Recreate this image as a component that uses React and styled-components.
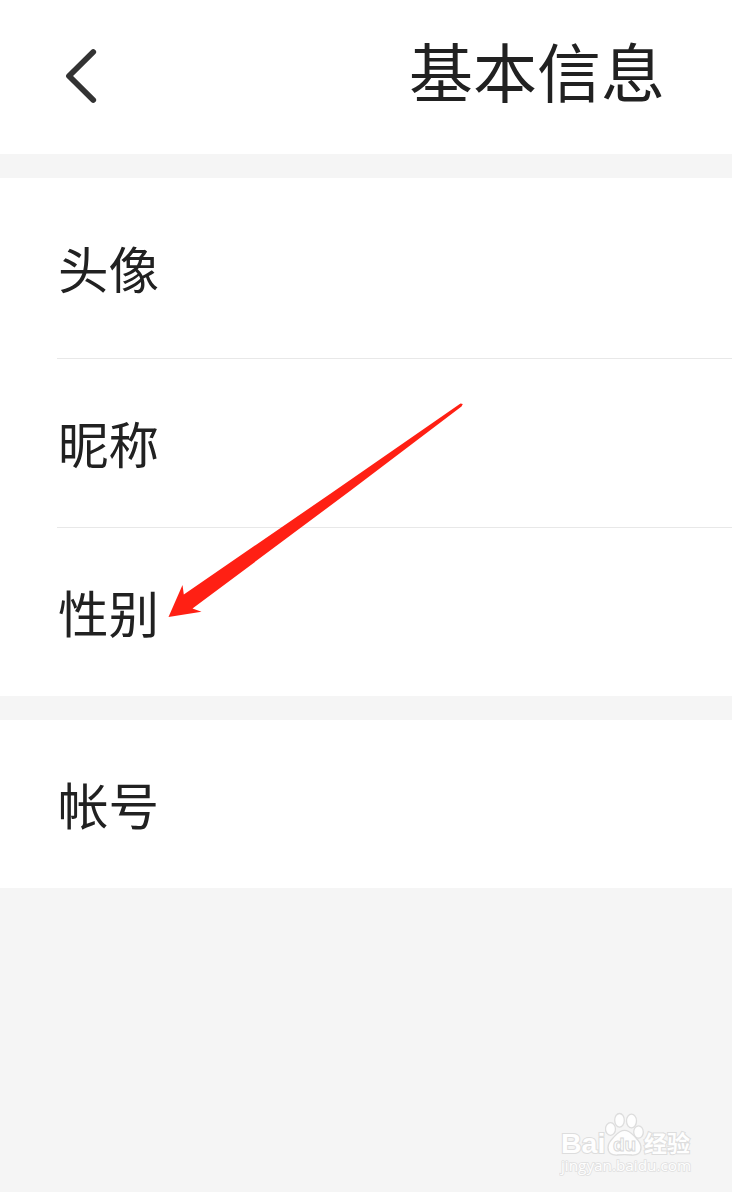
import styled, { createGlobalStyle } from "styled-components";

const GlobalStyle = createGlobalStyle`
  * {
    box-sizing: border-box;
  }

  body {
    margin: 0;
    background: #f5f5f5;
    font-family: "Noto Sans CJK SC", sans-serif;
    color: #212121;
  }
`;

const Page = styled.div`
  position: relative;
  width: 732px;
  height: 1192px;
  display: flex;
  flex-direction: column;
  gap: 24px;
  overflow: hidden;
  background: #f5f5f5;
`;

const Header = styled.header`
  height: 154px;
  display: flex;
  align-items: center;
  justify-content: space-between;
  padding: 0 67px 0 60px;
  background: #fff;
`;

const BackButton = styled.button`
  width: 44px;
  height: 64px;
  padding: 0;
  border: 0;
  background: none;
  cursor: pointer;

  svg {
    display: block;
  }
`;

const Title = styled.h1`
  margin: 0;
  padding-bottom: 16px;
  font-size: 64px;
  font-weight: 400;
  line-height: 96px;
`;

const Group = styled.section`
  background: #fff;
`;

const Row = styled.div`
  height: ${props => props.$height}px;
  margin-left: 57px;
  display: flex;
  align-items: center;
  border-bottom: ${props => (props.$divider ? "1px solid #e8e8e8" : "0")};
`;

const Label = styled.span`
  padding: 0 0 ${props => props.$lift}px 1px;
  font-size: 50.5px;
  line-height: 72px;
`;

const Arrow = styled.svg`
  position: absolute;
  left: 160px;
  top: 396px;
`;

const Watermark = styled.div`
  position: absolute;
  left: 561px;
  top: 1112px;
  width: 136px;
  opacity: 0.95;
`;

const Brand = styled.div`
  height: 45px;
  display: flex;
  align-items: flex-end;
`;

const Word = styled.span`
  width: ${props => props.$width}px;
  font-family: ${props => props.$font};
  font-size: ${props => props.$size}px;
  font-weight: 700;
  line-height: ${props => props.$line}px;
  white-space: nowrap;
  color: #fff;
  -webkit-text-stroke: 2px #dcdcdc;
  paint-order: stroke fill;
`;

const Paw = styled.svg`
  flex: none;
`;

const Site = styled.div`
  font-family: "Open Sans", sans-serif;
  font-size: 15.3px;
  line-height: 17px;
  white-space: nowrap;
  color: #fff;
  -webkit-text-stroke: 1.6px #e0e0e0;
  paint-order: stroke fill;
`;

const groups = [
  [
    { label: "头像", height: 181, lift: 2, divider: true },
    { label: "昵称", height: 169, lift: 2, divider: true },
    { label: "性别", height: 168, lift: 2, divider: false },
  ],
  [{ label: "帐号", height: 168, lift: 2, divider: false }],
];

export default function App() {
  return (
    <>
      <GlobalStyle />
      <Page>
        <Header>
          <BackButton aria-label="返回">
            <svg width="44" height="64" viewBox="0 0 44 64" fill="none">
              <path
                d="M33.2 7 L9 31 L33.2 55"
                stroke="#333"
                strokeWidth="5.8"
                strokeLinecap="round"
                strokeLinejoin="round"
              />
            </svg>
          </BackButton>
          <Title>基本信息</Title>
        </Header>
        {groups.map((rows, index) => (
          <Group key={index}>
            {rows.map(row => (
              <Row key={row.label} $height={row.height} $divider={row.divider}>
                <Label $lift={row.lift}>{row.label}</Label>
              </Row>
            ))}
          </Group>
        ))}

        <Arrow width="310" height="230" viewBox="0 0 310 230">
          <path
            d="M300.5 7.5 L302.8 8 L301.5 10.5 L190 95 L32.5 212.5 L41.5 215.7 L8.5 221 L22.5 189 L23.8 198.5 L170 98 Z"
            fill="#ff2014"
          />
        </Arrow>

        <Watermark>
          <Brand>
            <Word $width={44} $size={28.5} $line={28} $font='"Liberation Sans", sans-serif'>
              Bai
            </Word>
            <Paw width="39" height="45" viewBox="0 0 39 45">
              <g fill="#fff" stroke="#dcdcdc" strokeWidth="1.3">
                <ellipse cx="5.5" cy="17" rx="5" ry="6.3" />
                <ellipse cx="14.5" cy="8.3" rx="4.8" ry="6.8" />
                <ellipse cx="26.5" cy="9" rx="5" ry="6.8" />
                <ellipse cx="33.5" cy="20" rx="4.8" ry="6.2" />
                <path d="M19.5 18.3 C25 18.3 27.5 22.5 31 26 C34.5 29.5 36 32 36 35.5 C36 41 32.5 43.3 27 43 C22 42.5 17 42.5 12 43 C6.5 43.3 3 41 3 35.5 C3 32 4.5 29.5 8 26 C11.5 22.5 14 18.3 19.5 18.3 Z" />
              </g>
              <text
                x="19.5"
                y="38.5"
                textAnchor="middle"
                fontFamily="Liberation Sans, sans-serif"
                fontSize="19"
                fontWeight="700"
                fill="#fff"
                stroke="#d8d8d8"
                strokeWidth="1"
              >
                du
              </text>
            </Paw>
            <Word $width={48} $size={23} $line={30} $font='"Noto Sans CJK SC", sans-serif'>
              经验
            </Word>
          </Brand>
          <Site>jingyan.baidu.com</Site>
        </Watermark>
      </Page>
    </>
  );
}
